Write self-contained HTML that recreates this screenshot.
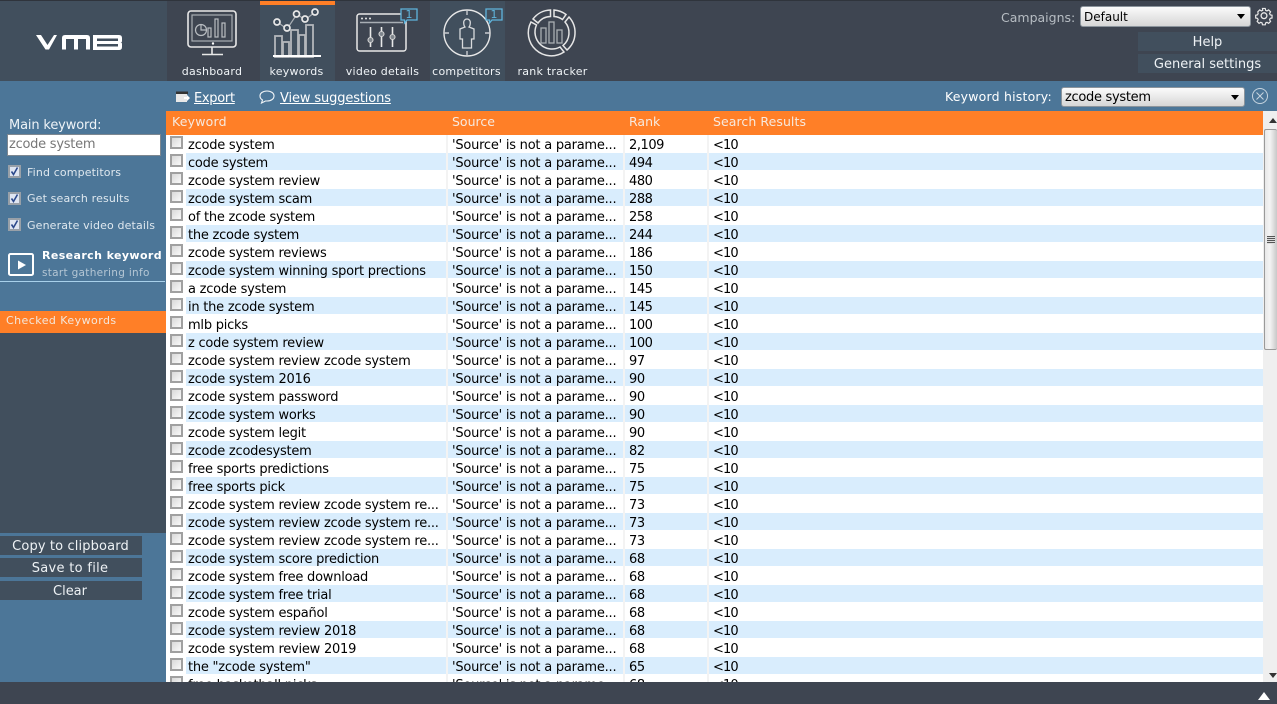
<!DOCTYPE html>
<html><head><meta charset="utf-8"><style>
html,body{margin:0;padding:0}
body{width:1277px;height:704px;overflow:hidden;position:relative;background:#4c7698;font-family:"DejaVu Sans","Liberation Sans",sans-serif;font-size:12px}
.a{position:absolute;white-space:nowrap}
.t{color:#f0f4f7;font-size:11px;line-height:14px;text-align:center;letter-spacing:.25px;top:65px}
.btn{position:absolute;background:#414f5d;color:#eef2f5;text-align:center;font-size:13px;line-height:21px;height:19px;overflow:hidden}
.sel{position:absolute;box-sizing:border-box;border:1px solid #8b949c;border-radius:3px;background:linear-gradient(#fbfbfb,#d6d6d6);color:#000;padding-left:3px;font-size:12px;line-height:17px}
.sel:after{content:"";position:absolute;right:5px;top:7px;border:4px solid transparent;border-top:5px solid #000;border-bottom:0}
.cb{position:absolute;left:8px;width:9px;height:9px;border:2px solid #98a0a8;background:#dfe6f2}
.cb svg{position:absolute;left:-1px;top:-1px}
.l{position:absolute;left:27px;color:#dfe8ef;font-size:11px;line-height:14px;letter-spacing:.14px}
#tb{position:absolute;left:166px;top:135px;width:1098px;height:547px;overflow:hidden;background:#fff}
.r{position:relative;height:17px;margin-bottom:1px;font-size:13px;line-height:19px;color:#000;white-space:nowrap;letter-spacing:-.23px}
.r:nth-child(even){background:linear-gradient(90deg,#fff 20px,#d9edfd 20px)}
.r:nth-child(odd){background:#fff}
.r i{position:absolute;left:4px;top:1px;width:9px;height:9px;border:2px solid #a0a0a0;background:linear-gradient(135deg,#d8d8d8,#fafafa)}
.r b{position:absolute;font-weight:normal;top:0;margin-top:0;padding-top:1px}
.r b:nth-of-type(1){left:22px}
.r b:nth-of-type(2){left:286px}
.r b:nth-of-type(3){left:463px;letter-spacing:-.45px}
.r b:nth-of-type(4){left:547px;letter-spacing:-.9px}
svg{position:absolute;overflow:visible}
</style></head><body>
<!-- top bar -->
<div class="a" style="left:0;top:0;width:1277px;height:81px;background:#3e4551"></div>
<div class="a" style="left:0;top:1px;width:167px;height:80px;background:#414f5d"></div>
<div class="a" style="left:0;top:0;width:1277px;height:1px;background:#2f343c"></div>
<div class="a" style="left:260px;top:1px;width:75px;height:80px;background:#414f5d"></div>
<div class="a" style="left:260px;top:1px;width:75px;height:4px;background:#ff7f27"></div>
<div class="a" style="left:430px;top:1px;width:75px;height:80px;background:#414f5d"></div>

<!-- logo -->
<svg style="left:0;top:0" width="167" height="81">
<path d="M36 35h5l6.500 10L54 35h3l-8 14.500h-3.500z" fill="#fff"/>
<path d="M62 49.500V38q0-3 3-3h22q3 0 3 3v11.500h-4V39h-8v10.500h-4V39h-8v10.500z" fill="#fff"/>
<path fill-rule="evenodd" d="M93 35h26q3 0 3 3v3q0 1.500-1.500 1.500q1.500 0 1.500 1.500v3q0 3-3 3H93z M97 38.500v2.500h21v-2.500z M97 44v2.500h21V44z" fill="#fff"/>
</svg>

<!-- dashboard icon -->
<svg style="left:187px;top:10px" width="50" height="46" fill="none" stroke="#e8e8e8" stroke-width="1.600">
<rect x="1" y="1" width="48" height="36" rx="3"/>
<rect x="5" y="5" width="40" height="26" stroke="#a8aeb4" stroke-width="1.200"/>
<circle cx="26" cy="33.500" r="1.200" fill="#fff" stroke="none"/>
<path d="M25 37v7M15 44.500h21" />
<g stroke="#b9bdc2" stroke-width="1.200"><circle cx="14" cy="20" r="5.500"/><path d="M14 14.500V20h5.500"/><rect x="21" y="18" width="3" height="9"/><rect x="28" y="9" width="3" height="18"/><rect x="35" y="13" width="3" height="14"/></g>
</svg>

<!-- keywords icon -->
<svg style="left:272px;top:6px" width="50" height="52" fill="none" stroke="#c9ccd0" stroke-width="1.600">
<path d="M4 15l11 8 10-15 8 6 10-8" stroke="#a9aeb3" stroke-width="1.200"/>
<g stroke="#e8e8e8" stroke-width="1.700" fill="#414f5d"><circle cx="5" cy="16" r="3"/><circle cx="15" cy="22" r="3"/><circle cx="24.500" cy="8" r="3"/><circle cx="33" cy="13" r="3"/><circle cx="43" cy="6" r="3"/></g>
<g stroke="#b3b7bb" stroke-width="1.800"><rect x="3" y="30" width="7" height="21"/><rect x="11" y="36" width="6" height="15"/><rect x="19" y="24" width="7" height="27"/><rect x="27" y="29" width="6" height="22"/><rect x="34" y="19" width="7" height="32"/></g>
</svg>
<div class="a" style="left:273px;top:55px;width:48px;height:2px;background:#fff"></div>

<!-- video details icon -->
<svg style="left:356px;top:13px" width="70" height="41" fill="none" stroke="#e8e8e8" stroke-width="1.500">
<rect x="1" y="1" width="49" height="37" rx="2.500"/>
<path d="M4 9.500h43" stroke="#a8aeb4"/>
<g fill="#e8e8e8" stroke="none"><circle cx="6" cy="5.500" r="1"/><circle cx="10" cy="5.500" r="1"/><circle cx="14" cy="5.500" r="1"/></g>
<path d="M14.500 14v20M25.500 14v20M36.500 14v20" stroke-width="1.600"/>
<g fill="#7e858c" stroke="#d5d5d5" stroke-width="1.100"><circle cx="14.500" cy="27" r="2.500"/><circle cx="25.500" cy="21" r="2.500"/><circle cx="36.500" cy="24" r="2.500"/></g>
</svg>
<svg style="left:400px;top:8px" width="18" height="16" fill="#3e4551" stroke="#5fb4dc" stroke-width="1.300"><path d="M1 1h16v11H7l-2.500 3v-3H1z"/></svg>
<div class="a" style="left:403px;top:8px;width:12px;color:#5fb4dc;font-size:11px;line-height:13px;text-align:center">1</div>

<!-- competitors icon -->
<svg style="left:443px;top:9px" width="50" height="48" fill="none" stroke="#e8e8e8" stroke-width="1.400">
<circle cx="24" cy="24" r="23"/>
<path d="M24 1v5M24 42v5M1 24h5M42 24h5" stroke="#c9ccd0"/>
<path d="M24 10a3.300 3.300 0 0 1 3.300 3.500q0 3-1.300 4.500l5 2v10h-2.500v9h-9v-9H17V20l5-2q-1.300-1.500-1.300-4.500A3.300 3.300 0 0 1 24 10z" stroke="#d8dadc" stroke-width="1.300"/>
</svg>
<svg style="left:485px;top:8px" width="18" height="16" fill="#414f5d" stroke="#5fb4dc" stroke-width="1.300"><path d="M1 1h16v11H7l-2.500 3v-3H1z"/></svg>
<div class="a" style="left:488px;top:8px;width:12px;color:#5fb4dc;font-size:11px;line-height:13px;text-align:center">1</div>

<!-- rank tracker icon -->
<svg style="left:528px;top:9px" width="48" height="48" fill="none" stroke="#e6e6e6" stroke-width="1.500">
<path d="M22.500 1A22.500 22.500 0 0 0 5 10l5 4A16 16 0 0 1 22.500 7.500zM26 1a22.500 22.500 0 0 1 12 4.500l-3.500 5A16 16 0 0 0 26 7.500zM41 8a23 23 0 0 1-2 33l-4-4.500A16.500 16.500 0 0 0 37 13zM36 43A23 23 0 0 1 3 13l5.500 3A17 17 0 0 0 32 38z"/>
<g stroke="#a9aeb3" stroke-width="1.300"><rect x="13" y="19" width="5" height="15"/><rect x="21" y="13" width="5" height="21"/><rect x="29" y="21" width="5" height="13"/></g>
</svg>

<div class="a t" style="left:167px;width:90px">dashboard</div>
<div class="a t" style="left:259px;width:75px">keywords</div>
<div class="a t" style="left:340px;width:85px">video details</div>
<div class="a t" style="left:429px;width:75px">competitors</div>
<div class="a t" style="left:510px;width:85px">rank tracker</div>

<!-- top right -->
<div class="a" style="left:1001px;top:10px;color:#b7bdc3;font-size:12.500px;line-height:15px">Campaigns:</div>
<div class="sel" style="left:1080px;top:6px;width:171px;height:21px;line-height:20px">Default</div>
<svg style="left:1256px;top:8px" width="16" height="16" fill="none" stroke="#e8e8e8" stroke-width="1.300"><path d="M6.500 .8h3l.4 2 1.500.7 1.800-1.100 2.100 2.100-1.100 1.800.7 1.500 2 .4v3l-2 .4-.7 1.500 1.100 1.800-2.100 2.100-1.800-1.100-1.500.7-.4 2h-3l-.4-2-1.500-.7-1.800 1.100-2.100-2.100 1.100-1.800-.7-1.500-2-.4v-3l2-.4.7-1.500L1.400 4.500l2.100-2.100 1.800 1.100 1.500-.7z" transform="translate(.5 -.3) scale(.92)"/><circle cx="8" cy="7.700" r="2.900"/></svg>
<div class="btn" style="left:1138px;top:32px;width:139px">Help</div>
<div class="btn" style="left:1138px;top:54px;width:139px">General settings</div>

<!-- sub bar -->
<svg style="left:176px;top:91px" width="14" height="12"><path d="M0 .5h12v2.500H0z" fill="#333"/><path d="M0 3h11v8H0z" fill="#e8e8e8"/><path d="M8 6h3V4l3 3-3 3V8H8z" fill="#fff"/></svg>
<div class="a" style="left:194px;top:91px;color:#fff;font-size:13px;line-height:16px;text-decoration:underline;letter-spacing:-.3px">Export</div>
<svg style="left:259px;top:90px" width="16" height="14" fill="none" stroke="#f0f4f7" stroke-width="1.100"><path d="M8 1c4 0 7 2 7 5s-3 5-7 5H6.500L2.500 13l1-3C2 9.200 1 7.800 1 6c0-3 3-5 7-5z"/></svg>
<div class="a" style="left:280px;top:91px;color:#fff;font-size:13px;line-height:16px;text-decoration:underline;letter-spacing:-.13px">View suggestions</div>
<div class="a" style="left:945px;top:89px;color:#fff;font-size:12.500px;line-height:15px;letter-spacing:.2px">Keyword history:</div>
<div class="sel" style="left:1061px;top:87px;width:184px;height:20px;font-size:13px;line-height:20px;letter-spacing:-.3px">zcode system</div>
<svg style="left:1252px;top:88px" width="16" height="16" fill="none" stroke="#c6d4df" stroke-width="1"><circle cx="8" cy="8" r="7.500"/><path d="M4.500 4.500l7 7M11.500 4.500l-7 7"/></svg>

<!-- sidebar -->
<div class="a" style="left:9px;top:118px;color:#eef3f7;font-size:13px;line-height:16px;letter-spacing:-.15px">Main keyword:</div>
<div class="a" style="left:7px;top:134px;width:154px;height:22px;box-sizing:border-box;border:1px solid #7d8790;background:#fff;color:#777;font-size:13px;line-height:19px;padding-left:1px;letter-spacing:-.25px">zcode system</div>
<div class="cb" style="top:165px"><svg width="11" height="11" fill="none" stroke="#2c4a8c" stroke-width="1.600"><path d="M2.500 5.500l2 3 4-7"/></svg></div><div class="l" style="top:166px">Find competitors</div>
<div class="cb" style="top:192px"><svg width="11" height="11" fill="none" stroke="#2c4a8c" stroke-width="1.600"><path d="M2.500 5.500l2 3 4-7"/></svg></div><div class="l" style="top:192px">Get search results</div>
<div class="cb" style="top:218px"><svg width="11" height="11" fill="none" stroke="#2c4a8c" stroke-width="1.600"><path d="M2.500 5.500l2 3 4-7"/></svg></div><div class="l" style="top:219px">Generate video details</div>
<svg style="left:8px;top:253px" width="26" height="23" fill="none"><rect x="1" y="1" width="24" height="21" rx="1.500" stroke="#fff" stroke-width="2"/><path d="M10 7.500l8 4.500-8 4.500z" fill="#fff"/></svg>
<div class="a" style="left:42px;top:249px;color:#fff;font-size:11px;font-weight:bold;line-height:14px;letter-spacing:.4px">Research keyword</div>
<div class="a" style="left:42px;top:267px;color:#b4c6d4;font-size:10.500px;line-height:13px;letter-spacing:.3px">start gathering info</div>
<div class="a" style="left:0;top:281px;width:165px;height:1px;background:#a8d0ea"></div>
<div class="a" style="left:0;top:311px;width:166px;height:22px;background:#ff7f27"></div>
<div class="a" style="left:6px;top:314px;color:#f4e6da;font-size:11px;line-height:14px;letter-spacing:.45px">Checked Keywords</div>
<div class="a" style="left:0;top:333px;width:166px;height:200px;background:#414f5d"></div>
<div class="btn" style="left:0;top:536px;width:140px;width:141px;letter-spacing:.13px">Copy to clipboard</div>
<div class="btn" style="left:0;top:558px;width:140px;letter-spacing:.3px">Save to file</div>
<div class="btn" style="left:0;top:581px;width:140px">Clear</div>
<div class="a" style="left:140px;top:536px;width:2px;height:19px;background:#414f5d"></div>
<div class="a" style="left:140px;top:558px;width:2px;height:19px;background:#414f5d"></div>
<div class="a" style="left:140px;top:581px;width:2px;height:19px;background:#414f5d"></div>

<!-- table header -->
<div class="a" style="left:166px;top:111px;width:1098px;height:24px;background:#ff7f27"></div>
<div class="a" style="left:172px;top:114px;color:#f7e9de;font-size:12.500px;line-height:15px;letter-spacing:.2px">Keyword</div>
<div class="a" style="left:452px;top:114px;color:#f7e9de;font-size:12.500px;line-height:15px">Source</div>
<div class="a" style="left:629px;top:114px;color:#f7e9de;font-size:12.500px;line-height:15px">Rank</div>
<div class="a" style="left:713px;top:114px;color:#f7e9de;font-size:12.500px;line-height:15px;letter-spacing:.07px">Search Results</div>

<!-- rows -->
<div id="tb">
<div class="r"><i></i><b>zcode system</b><b>'Source' is not a parame...</b><b>2,109</b><b>&lt;10</b></div>
<div class="r"><i></i><b>code system</b><b>'Source' is not a parame...</b><b>494</b><b>&lt;10</b></div>
<div class="r"><i></i><b>zcode system review</b><b>'Source' is not a parame...</b><b>480</b><b>&lt;10</b></div>
<div class="r"><i></i><b>zcode system scam</b><b>'Source' is not a parame...</b><b>288</b><b>&lt;10</b></div>
<div class="r"><i></i><b>of the zcode system</b><b>'Source' is not a parame...</b><b>258</b><b>&lt;10</b></div>
<div class="r"><i></i><b>the zcode system</b><b>'Source' is not a parame...</b><b>244</b><b>&lt;10</b></div>
<div class="r"><i></i><b>zcode system reviews</b><b>'Source' is not a parame...</b><b>186</b><b>&lt;10</b></div>
<div class="r"><i></i><b>zcode system winning sport prections</b><b>'Source' is not a parame...</b><b>150</b><b>&lt;10</b></div>
<div class="r"><i></i><b>a zcode system</b><b>'Source' is not a parame...</b><b>145</b><b>&lt;10</b></div>
<div class="r"><i></i><b>in the zcode system</b><b>'Source' is not a parame...</b><b>145</b><b>&lt;10</b></div>
<div class="r"><i></i><b>mlb picks</b><b>'Source' is not a parame...</b><b>100</b><b>&lt;10</b></div>
<div class="r"><i></i><b>z code system review</b><b>'Source' is not a parame...</b><b>100</b><b>&lt;10</b></div>
<div class="r"><i></i><b>zcode system review zcode system</b><b>'Source' is not a parame...</b><b>97</b><b>&lt;10</b></div>
<div class="r"><i></i><b>zcode system 2016</b><b>'Source' is not a parame...</b><b>90</b><b>&lt;10</b></div>
<div class="r"><i></i><b>zcode system password</b><b>'Source' is not a parame...</b><b>90</b><b>&lt;10</b></div>
<div class="r"><i></i><b>zcode system works</b><b>'Source' is not a parame...</b><b>90</b><b>&lt;10</b></div>
<div class="r"><i></i><b>zcode system legit</b><b>'Source' is not a parame...</b><b>90</b><b>&lt;10</b></div>
<div class="r"><i></i><b>zcode zcodesystem</b><b>'Source' is not a parame...</b><b>82</b><b>&lt;10</b></div>
<div class="r"><i></i><b>free sports predictions</b><b>'Source' is not a parame...</b><b>75</b><b>&lt;10</b></div>
<div class="r"><i></i><b>free sports pick</b><b>'Source' is not a parame...</b><b>75</b><b>&lt;10</b></div>
<div class="r"><i></i><b>zcode system review zcode system re...</b><b>'Source' is not a parame...</b><b>73</b><b>&lt;10</b></div>
<div class="r"><i></i><b>zcode system review zcode system re...</b><b>'Source' is not a parame...</b><b>73</b><b>&lt;10</b></div>
<div class="r"><i></i><b>zcode system review zcode system re...</b><b>'Source' is not a parame...</b><b>73</b><b>&lt;10</b></div>
<div class="r"><i></i><b>zcode system score prediction</b><b>'Source' is not a parame...</b><b>68</b><b>&lt;10</b></div>
<div class="r"><i></i><b>zcode system free download</b><b>'Source' is not a parame...</b><b>68</b><b>&lt;10</b></div>
<div class="r"><i></i><b>zcode system free trial</b><b>'Source' is not a parame...</b><b>68</b><b>&lt;10</b></div>
<div class="r"><i></i><b>zcode system español</b><b>'Source' is not a parame...</b><b>68</b><b>&lt;10</b></div>
<div class="r"><i></i><b>zcode system review 2018</b><b>'Source' is not a parame...</b><b>68</b><b>&lt;10</b></div>
<div class="r"><i></i><b>zcode system review 2019</b><b>'Source' is not a parame...</b><b>68</b><b>&lt;10</b></div>
<div class="r"><i></i><b>the "zcode system"</b><b>'Source' is not a parame...</b><b>65</b><b>&lt;10</b></div>
<div class="r"><i></i><b>free basketball picks</b><b>'Source' is not a parame...</b><b>68</b><b>&lt;10</b></div>
</div>
<div class="a" style="left:446px;top:135px;width:2px;height:547px;background:#f3f3f3"></div>
<div class="a" style="left:623px;top:135px;width:2px;height:547px;background:#f3f3f3"></div>
<div class="a" style="left:707px;top:135px;width:2px;height:547px;background:#f3f3f3"></div>

<!-- scrollbar -->
<div class="a" style="left:1263px;top:111px;width:14px;height:571px;background:#efefef"></div>
<div class="a" style="left:1269px;top:118px;border:4px solid transparent;border-bottom:5px solid #333;border-top:0"></div>
<div class="a" style="left:1264px;top:129px;width:13px;height:221px;box-sizing:border-box;border:1px solid #9a9a9a;border-right:0;border-radius:2px;background:linear-gradient(90deg,#e8e8e8,#f4f4f4 40%,#c8c8c8)"></div>
<div class="a" style="left:1267px;top:236px;width:8px;height:8px;background:repeating-linear-gradient(#555 0 1px,#ddd 1px 2px)"></div>
<div class="a" style="left:1269px;top:673px;border:4px solid transparent;border-top:5px solid #333;border-bottom:0"></div>

<!-- bottom bar -->
<div class="a" style="left:0;top:682px;width:1277px;height:22px;background:#3e4551"></div>
<div class="a" style="left:1258px;top:692px;border:6px solid transparent;border-bottom:8px solid #fff;border-top:0"></div>
</body></html>
